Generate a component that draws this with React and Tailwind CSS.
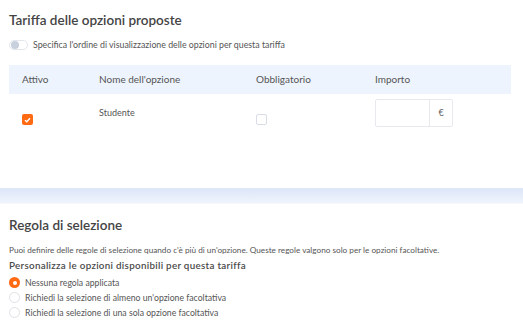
import React from "react";

const Radio = ({ checked, label }) => (
  <label className="flex items-center gap-[5px] h-[15px]">
    {checked ? (
      <span className="w-[11px] h-[11px] rounded-full bg-[#ff6a13] flex items-center justify-center">
        <span className="w-[4px] h-[4px] rounded-full bg-white" />
      </span>
    ) : (
      <span className="w-[11px] h-[11px] rounded-full border border-[#dfe1e6] bg-white" />
    )}
    <span className="text-[8.7px] text-[#555]">{label}</span>
  </label>
);

const App = () => {
  return (
    <div className="w-[523px] h-[333px] bg-white overflow-hidden text-[#444]" style={{ fontFamily: "Lato, sans-serif" }}>
      <div className="px-[9px] pt-[12px]">
        <h2 className="text-[13.5px] font-semibold text-[#444] leading-[16px]">
          Tariffa delle opzioni proposte
        </h2>
        <div className="flex items-center gap-[5px] mt-[10px]">
          <span className="w-[19px] h-[10px] rounded-full border border-[#e3e6eb] bg-white flex items-center px-[1px]">
            <span className="w-[8px] h-[8px] rounded-full bg-[#c8d0de]" />
          </span>
          <span className="text-[8.8px] text-[#555]">
            Specifica l'ordine di visualizzazione delle opzioni per questa tariffa
          </span>
        </div>

        <div className="mt-[14px] w-[502px]">
          <div className="grid grid-cols-[77px_157px_119px_1fr] h-[29px] items-center bg-[#eef4fd] px-[13px] text-[10px] text-[#555]">
            <span>Attivo</span>
            <span>Nome dell'opzione</span>
            <span>Obbligatorio</span>
            <span>Importo</span>
          </div>
          <div className="grid grid-cols-[77px_157px_119px_1fr] px-[13px] pt-[5px] h-[94px]">
            <div className="pt-[15px]">
              <span className="w-[11px] h-[11px] rounded-[2px] bg-[#ff6a13] flex items-center justify-center">
                <svg width="7" height="6" viewBox="0 0 7 6" fill="none">
                  <path d="M1 3.2 L2.8 4.8 L6 1.2" stroke="white" strokeWidth="1.4" />
                </svg>
              </span>
            </div>
            <div className="pt-[8px] text-[9px] leading-[12px] text-[#555]">Studente</div>
            <div className="pt-[15px]">
              <span className="block w-[11px] h-[11px] rounded-[2px] border border-[#d9dde6] bg-white" />
            </div>
            <div>
              <div className="flex w-[78px] h-[28px] border border-[#e8e9ee] rounded-[2px]">
                <div className="flex-1" />
                <div className="w-[23px] border-l border-[#e8e9ee] flex items-center justify-center text-[9px] text-[#666]">
                  €
                </div>
              </div>
            </div>
          </div>
        </div>
      </div>

      <div className="h-[16px] bg-gradient-to-b from-[#dce6f8] to-[#f0f4fc] border-b border-[#f5f7fc]" />

      <div className="px-[9px] pt-[13px]">
        <h2 className="text-[13.5px] font-semibold text-[#444] leading-[16px]">Regola di selezione</h2>
        <p className="mt-[11px] text-[8.2px] text-[#555] leading-[12px]">
          Puoi definire delle regole di selezione quando c'è più di un'opzione. Queste regole valgono solo per le opzioni facoltative.
        </p>
        <p className="mt-[2px] text-[9.8px] font-semibold text-[#4a4a4a] leading-[14px] tracking-[0.3px]">
          Personalizza le opzioni disponibili per questa tariffa
        </p>
        <div className="mt-[3px] flex flex-col">
          <Radio checked label="Nessuna regola applicata" />
          <Radio label="Richiedi la selezione di almeno un'opzione facoltativa" />
          <Radio label="Richiedi la selezione di una sola opzione facoltativa" />
        </div>
      </div>
    </div>
  );
};

export default App;
